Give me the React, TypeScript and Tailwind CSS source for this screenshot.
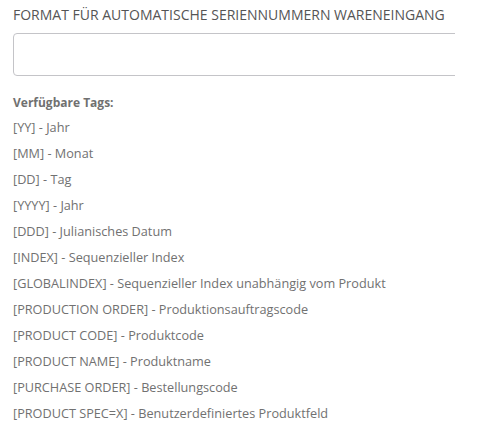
const tags: [string, string][] = [
  ["[YY]", "Jahr"],
  ["[MM]", "Monat"],
  ["[DD]", "Tag"],
  ["[YYYY]", "Jahr"],
  ["[DDD]", "Julianisches Datum"],
  ["[INDEX]", "Sequenzieller Index"],
  ["[GLOBALINDEX]", "Sequenzieller Index unabhängig vom Produkt"],
  ["[PRODUCTION ORDER]", "Produktionsauftragscode"],
  ["[PRODUCT CODE]", "Produktcode"],
  ["[PRODUCT NAME]", "Produktname"],
  ["[PURCHASE ORDER]", "Bestellungscode"],
  ["[PRODUCT SPEC=X]", "Benutzerdefiniertes Produktfeld"],
];

export default function App() {
  return (
    <main
      className="min-h-screen bg-white pl-[13px] pt-[6px] text-[#717171]"
      style={{ fontFamily: '"Open Sans", sans-serif' }}
    >
      <label className="block text-[14px] leading-[18px] uppercase text-[#555]">
        Format für automatische Seriennummern Wareneingang
      </label>
      <div className="mt-[9px] w-[442px] overflow-hidden">
        <input
          type="text"
          className="block h-[43px] w-[470px] rounded-[4px] border border-[#c4c4c8] bg-white px-3 outline-none"
        />
      </div>
      <div className="mt-[17px]">
        <div className="text-[12px] font-bold leading-[20px] text-[#707070]">
          Verfügbare Tags:
        </div>
        <ul className="mt-[1px]">
          {tags.map(([tag, label]) => (
            <li key={tag} className="text-[12.7px] leading-[26px]">
              {tag} - {label}
            </li>
          ))}
        </ul>
      </div>
    </main>
  );
}
